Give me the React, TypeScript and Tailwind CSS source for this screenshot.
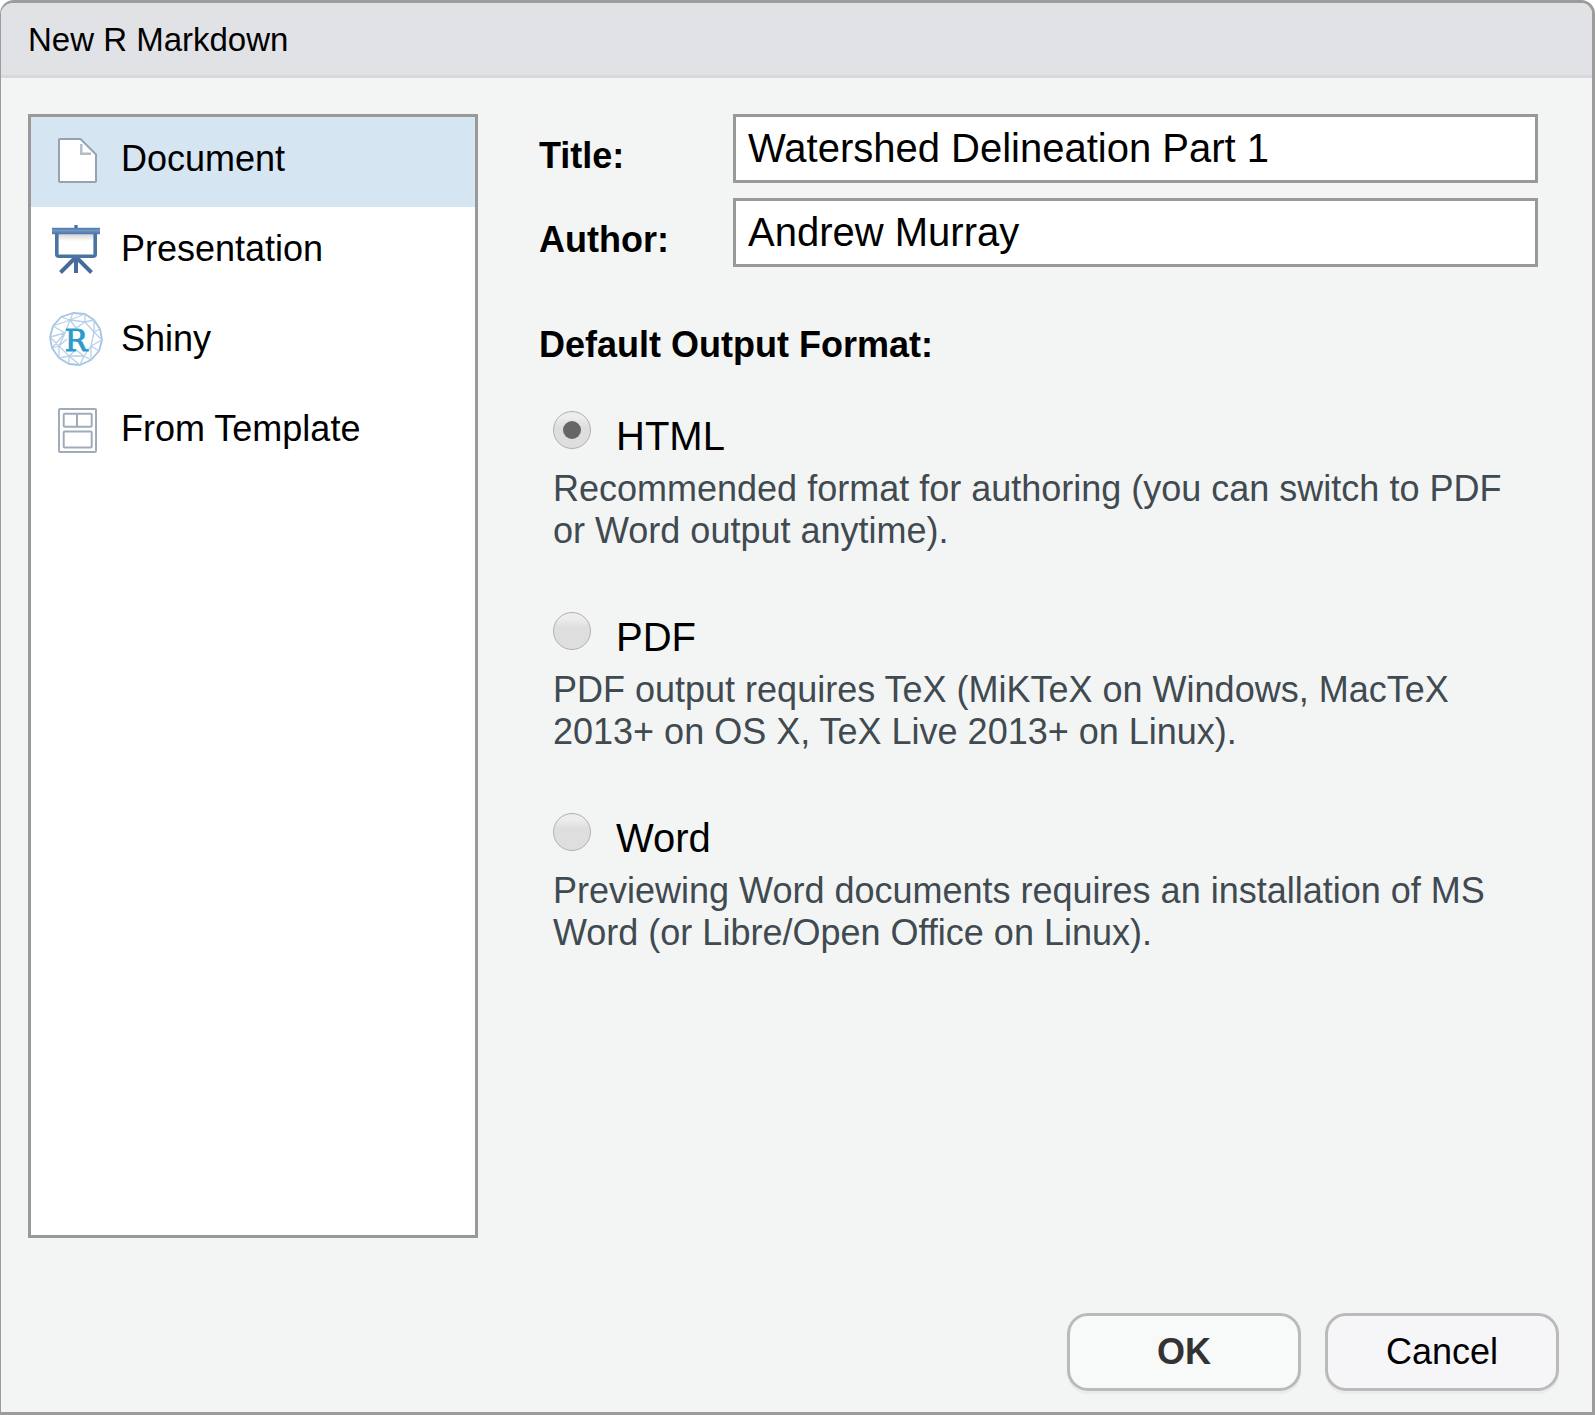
import { useState } from "react";
import type { ReactNode } from "react";

const svgProps = {
  width: 54,
  height: 54,
  viewBox: "0 0 54 54",
  fill: "none",
  "aria-hidden": true,
} as const;

function DocumentIcon() {
  return (
    <svg {...svgProps}>
      <path d="M11 7H31.5L47 22.5V49Q47 50 46 50H11Q10 50 10 49V8Q10 7 11 7Z" fill="#fff" stroke="#93a3b4" strokeWidth="2" />
      <path d="M32.3 12V21.7H42" stroke="#b4bcc8" strokeWidth="2.4" />
    </svg>
  );
}

function PresentationIcon() {
  return (
    <svg {...svgProps}>
      <defs>
        <linearGradient id="bar" x1="0" y1="0" x2="0" y2="1">
          <stop offset="0" stopColor="#4c76a8" />
          <stop offset="0.4" stopColor="#7097c4" />
          <stop offset="1" stopColor="#4a74a6" />
        </linearGradient>
        <linearGradient id="screen" x1="0" y1="0" x2="0" y2="1">
          <stop offset="0.08" stopColor="#cccccc" />
          <stop offset="0.4" stopColor="#fff" />
        </linearGradient>
      </defs>
      <path d="M27 35L11.5 50.5M27 35L42.5 50.5M27 35V51" stroke="#466c9c" strokeWidth="4" />
      <rect x="25.4" y="3" width="3.2" height="5" fill="#466c9c" />
      <rect x="7.8" y="9" width="38.4" height="25.2" rx="2" fill="url(#screen)" stroke="#4a73a3" strokeWidth="3.6" />
      <rect x="3" y="5.8" width="48" height="6.4" fill="url(#bar)" />
    </svg>
  );
}

function ShinyIcon() {
  return (
    <svg {...svgProps}>
      <g stroke="#b5d0e8" strokeWidth="1.3" strokeLinejoin="round">
        <path strokeWidth="1.8" stroke="#a3c4e2" d="M24 1L36 2L45 8L51 17L53 28L50 39L42 48L31 53L20 52L10 46L3 36L1 25L4 14L12 5Z" />
        <path d="M12 5L21 8L24 1M21 8L4 14M21 8L36 2M21 8L36 10L45 8M36 10L36 2M36 10L45 20L45 8M45 20L51 17M45 20L53 28M21 8L16 21L4 14M16 21L1 25M16 21L3 36M16 21L10 34L3 36M10 34L1 25M10 34L10 46M10 34L20 44L10 46M20 44L20 52M20 44L31 53M20 44L35 44L31 53M35 44L42 48M35 44L42 34L42 48M42 34L50 39M42 34L53 28M42 34L45 20M20 44L27 38L35 44M21 8L27 16L36 10M10 34L18 27" />
      </g>
      <text
        x="27"
        y="39"
        textAnchor="middle"
        fill="#2d9ccc"
        stroke="#2d9ccc"
        strokeWidth="1"
        className="font-['DejaVu_Serif',serif] text-[30px]"
      >
        R
      </text>
    </svg>
  );
}

function TemplateIcon() {
  return (
    <svg {...svgProps} stroke="#a0acb9" strokeWidth="2">
      <rect x="10" y="7" width="37" height="43" rx="1" />
      <rect x="14.7" y="11.8" width="28" height="13" rx="1" />
      <path d="M28 11.8V24.8" />
      <rect x="14.7" y="29.6" width="28" height="16" rx="1" />
    </svg>
  );
}

const kinds: { name: string; icon: ReactNode }[] = [
  { name: "Document", icon: <DocumentIcon /> },
  { name: "Presentation", icon: <PresentationIcon /> },
  { name: "Shiny", icon: <ShinyIcon /> },
  { name: "From Template", icon: <TemplateIcon /> },
];

const formats = [
  {
    name: "HTML",
    note: "Recommended format for authoring (you can switch to PDF or Word output anytime).",
  },
  {
    name: "PDF",
    note: "PDF output requires TeX (MiKTeX on Windows, MacTeX 2013+ on OS X, TeX Live 2013+ on Linux).",
  },
  {
    name: "Word",
    note: "Previewing Word documents requires an installation of MS Word (or Libre/Open Office on Linux).",
  },
];

function Field({ id, label, value }: { id: string; label: string; value: string }) {
  return (
    <div className="flex">
      <label htmlFor={id} className="w-[194px] shrink-0 pt-[21px] text-4xl/[42px] font-bold">
        {label}
      </label>
      <input
        id={id}
        type="text"
        defaultValue={value}
        className="h-[69px] min-w-0 flex-1 border-3 border-[#999] bg-white px-3 text-[40px] outline-none"
      />
    </div>
  );
}

export default function App() {
  const [kind, setKind] = useState("Document");
  const [format, setFormat] = useState("HTML");

  return (
    <form
      onSubmit={(e) => e.preventDefault()}
      className="flex min-h-screen flex-col overflow-hidden rounded-t-[14px] border-3 border-l border-[#9c9c9c] bg-[#f3f5f4] font-['Liberation_Sans',Arial,sans-serif] text-black"
    >
      <header className="border-b-3 border-[#d8d9dd] bg-[#e1e2e6] px-[27px] pt-[17px] pb-[15px]">
        <h1 className="text-[33px]/10">New R Markdown</h1>
      </header>

      <main className="flex flex-1 gap-[61px] pt-9 pr-[54px] pl-[27px]">
        <nav className="w-[450px] shrink-0 border-3 border-[#999] bg-white">
          {kinds.map((k) => (
            <button
              key={k.name}
              type="button"
              aria-pressed={kind === k.name}
              onClick={() => setKind(k.name)}
              className="flex h-[90px] w-full items-center gap-[18px] pb-1.5 pl-[18px] text-4xl aria-pressed:bg-[#d6e5f2]"
            >
              {k.icon}
              {k.name}
            </button>
          ))}
        </nav>

        <div className="min-w-0 flex-1">
          <div className="flex flex-col gap-[15px]">
            <Field id="title" label="Title:" value="Watershed Delineation Part 1" />
            <Field id="author" label="Author:" value="Andrew Murray" />
          </div>

          <fieldset className="mt-[57px]">
            <legend className="text-4xl/[42px] font-bold">Default Output Format:</legend>
            <div className="flex flex-col gap-[60px] pt-[45px] pl-3.5">
              {formats.map((f) => (
                <div key={f.name}>
                  <label className="flex items-start gap-[25px]">
                    <input
                      type="radio"
                      name="format"
                      checked={format === f.name}
                      onChange={() => setFormat(f.name)}
                      className="grid size-[38px] shrink-0 appearance-none place-items-center rounded-full border border-[#b0b0b0] bg-linear-to-b from-[#ededed] from-15% to-[#dedede] to-40% before:size-[18px] before:rounded-full checked:before:bg-[#666]"
                    />
                    <span className="pt-[3px] text-[40px]/[44px]">{f.name}</span>
                  </label>
                  <p className="pt-2.5 text-4xl/[42px] text-[#404a50]">{f.note}</p>
                </div>
              ))}
            </div>
          </fieldset>
        </div>
      </main>

      <footer className="flex justify-end gap-6 pt-[75px] pr-[33px] pb-[21px]">
        <button
          type="submit"
          className="h-[78px] w-[234px] rounded-[21px] border-3 border-[#bababa] bg-[#f8faf9] text-4xl font-bold text-[#333] shadow-[0_3px_0_#ebebeb]"
        >
          OK
        </button>
        <button
          type="button"
          className="h-[78px] w-[234px] rounded-[21px] border-3 border-[#bababa] bg-[#f6f6f9] text-4xl shadow-[0_3px_0_#ebebeb]"
        >
          Cancel
        </button>
      </footer>
    </form>
  );
}
